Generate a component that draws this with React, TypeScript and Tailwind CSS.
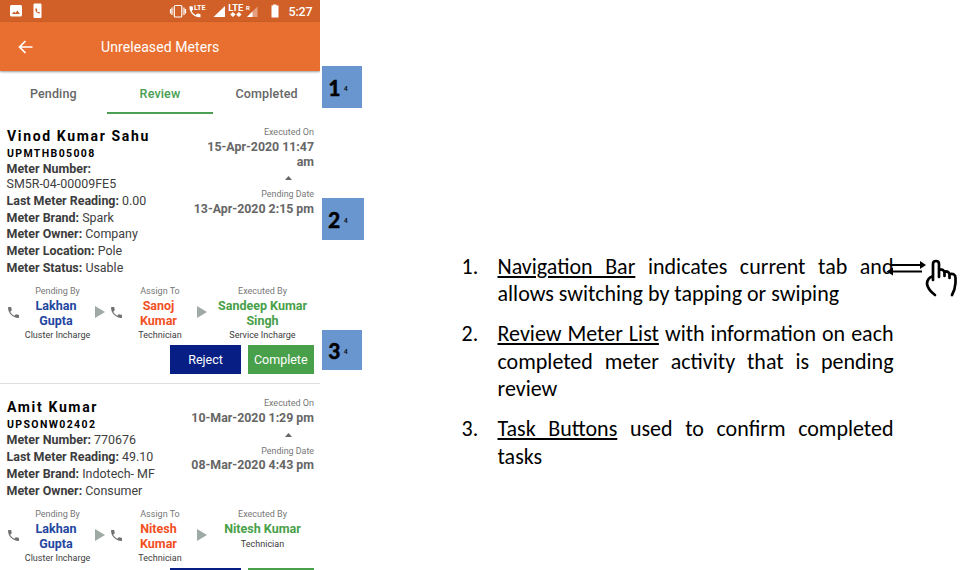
import React from "react";

type Person = { label: string; lines: string[]; role: string };
type Meter = {
  name: string;
  code: string;
  details: [string, string][];
  wrapFirst?: boolean;
  executed: string[];
  pending: string;
  people: Person[];
  actions: [string, string] | null;
};

const meters: Meter[] = [
  {
    name: "Vinod Kumar Sahu",
    code: "UPMTHB05008",
    wrapFirst: true,
    details: [
      ["Meter Number:", "SM5R-04-00009FE5"],
      ["Last Meter Reading:", "0.00"],
      ["Meter Brand:", "Spark"],
      ["Meter Owner:", "Company"],
      ["Meter Location:", "Pole"],
      ["Meter Status:", "Usable"],
    ],
    executed: ["15-Apr-2020 11:47", "am"],
    pending: "13-Apr-2020 2:15 pm",
    people: [
      { label: "Pending By", lines: ["Lakhan", "Gupta"], role: "Cluster Incharge" },
      { label: "Assign To", lines: ["Sanoj", "Kumar"], role: "Technician" },
      { label: "Executed By", lines: ["Sandeep Kumar", "Singh"], role: "Service Incharge" },
    ],
    actions: ["Reject", "Complete"],
  },
  {
    name: "Amit Kumar",
    code: "UPSONW02402",
    details: [
      ["Meter Number:", "770676"],
      ["Last Meter Reading:", "49.10"],
      ["Meter Brand:", "Indotech- MF"],
      ["Meter Owner:", "Consumer"],
    ],
    executed: ["10-Mar-2020 1:29 pm"],
    pending: "08-Mar-2020 4:43 pm",
    people: [
      { label: "Pending By", lines: ["Lakhan", "Gupta"], role: "Cluster Incharge" },
      { label: "Assign To", lines: ["Nitesh", "Kumar"], role: "Technician" },
      { label: "Executed By", lines: ["Nitesh Kumar"], role: "Technician" },
    ],
    actions: null,
  },
];

const PHONE =
  "M6.62 10.79c1.44 2.83 3.76 5.14 6.59 6.59l2.2-2.2c.27-.27.67-.36 1.02-.24 1.12.37 2.33.57 3.57.57.55 0 1 .45 1 1V20c0 .55-.45 1-1 1-9.39 0-17-7.61-17-17 0-.55.45-1 1-1h3.5c.55 0 1 .45 1 1 0 1.25.2 2.45.57 3.57.11.35.03.74-.25 1.02l-2.2 2.2z";

function Phone() {
  return (
    <svg viewBox="3 3 18 18" className="h-[11px] w-[11px] shrink-0 fill-[#6f7173]">
      <path d={PHONE} />
    </svg>
  );
}

function Arrow() {
  return (
    <svg viewBox="0 0 10 12" className="h-3 w-2.5 shrink-0 fill-[#9eaaa3]">
      <path d="M0 0L10 6L0 12Z" />
    </svg>
  );
}

function PersonBlock({ p, color, shift = "" }: { p: Person; color: string; shift?: string }) {
  return (
    <div className="flex flex-col items-center whitespace-nowrap text-center">
      <div className="h-[13px] text-[9px] leading-[13px] text-[#777]">{p.label}</div>
      <div className={`pt-[1px] text-[12.5px] leading-[14.5px] font-bold ${color} ${shift}`}>
        {p.lines.map((l) => (
          <div key={l}>{l}</div>
        ))}
      </div>
      <div className="text-[9px] leading-[14px] text-[#3c3c3c]">{p.role}</div>
    </div>
  );
}

function Card({ m }: { m: Meter }) {
  return (
    <section className="h-[271px] w-80 pt-[14px]">
      <div className={`flex justify-between pr-[6px] pl-[6.5px] ${m.wrapFirst ? "h-[157px]" : "h-[109px]"}`}>
        <div className="whitespace-nowrap">
          <div className="h-[17px] pl-[0.5px] text-[14px] leading-[17px] font-bold tracking-[1.65px] text-black">{m.name}</div>
          <div className="h-[15px] pl-[0.5px] text-[10.5px] leading-[17px] font-bold tracking-[1.38px] text-black">{m.code}</div>
          <div className="flex flex-col gap-[2px] pt-[2px] text-[12.45px] leading-[14.85px] text-[#404040]">
            {m.details.map(([k, v], i) => (
              <div key={k}>
                <b className="font-bold text-[#3c3c3c]">{k}</b> {m.wrapFirst && i === 0 && <br />}
                {v}
              </div>
            ))}
          </div>
        </div>
        <div className="text-right whitespace-nowrap text-[#666]">
          <div className="h-[12px] text-[9px] leading-[9px] text-[#777]">Executed On</div>
          <div className="text-[12.35px] leading-[14.5px] font-bold">
            {m.executed.map((l) => (
              <div key={l}>{l}</div>
            ))}
          </div>
          <svg viewBox="0 0 7 4" className="mt-[7px] mr-[22px] ml-auto block h-1 w-[7px] fill-[#666]">
            <path d="M0 4L3.5 0L7 4Z" />
          </svg>
          <div className="mt-[7px] h-[14px] text-[8.9px] leading-[14px] text-[#777]">Pending Date</div>
          <div className="pt-[0.5px] text-[12.35px] leading-[15px] font-bold">{m.pending}</div>
        </div>
      </div>
      <div className="grid h-[60px] grid-cols-[18px_79px_18px_73px_20px_109px]">
        <div className="flex items-center pb-[6px] pl-[8px]"><Phone /></div>
        <PersonBlock p={m.people[0]} color="text-[#1f479f]" shift="-ml-[3px]" />
        <div className="-ml-[2.500px] flex w-8 items-center pb-[6px]"><Arrow /><span className="w-[6px]" /><Phone /></div>
        <div className="pl-[17px]"><PersonBlock p={m.people[1]} color="text-[#f2501f]" shift="-ml-[3px]" /></div>
        <div className="flex items-center pb-[6px] pl-[9px]"><Arrow /></div>
        <PersonBlock p={m.people[2]} color="text-[#48a049]" />
      </div>
      <div className="flex h-[37.500px] justify-end gap-[7px] pr-[6.5px] text-[12.5px] leading-[30px] text-white">
        <button className="flex h-[29px] w-[71px] justify-center bg-[#071f85]">{m.actions?.[0]}</button>
        <button className="flex h-[29px] w-[65.500px] justify-center bg-[#48a04a]">{m.actions?.[1]}</button>
      </div>
      <hr className="h-[1.500px] border-0 bg-[#dedede]" />
    </section>
  );
}

function StatusBar() {
  return (
    <div className="h-[22px] bg-[#d06028]">
      <svg viewBox="0 0 320 22" className="h-[22px] w-80" fill="#fff">
        <path fillRule="evenodd" d="M11.5 5h9q1.5 0 1.5 1.5v8.5q0 1.500-1.500 1.500h-9q-1.500 0-1.500-1.500V6.500Q10 5 11.500 5ZM12 14h8l-2.600-3.500-2 2.500-1.400-1.500Z" />
        <path fillRule="evenodd" d="M34.500 3.500h6q1 0 1 1v12.500q0 1-1 1h-6q-1 0-1-1V4.500q0-1 1-1ZM35.300 8.500q-.2 4.800 4.500 5v-1.300l-1.400-.4-.5.500q-.8-.5-1.100-1.300l.5-.6-.3-1.900Z" />
        <g fill="none" stroke="#fff" strokeWidth="1.200">
          <rect x="174.300" y="5.500" width="7.500" height="11.500" rx="1" />
          <path d="M172 7.500v7.500M170.500 9v4.500M184 7.500v7.500M185.500 9v4.500" />
        </g>
        <path transform="translate(187.500 4.300) scale(.62)" d={PHONE} />
        <text x="194" y="9.800" fontSize="6.800" fontWeight="700" textLength="11.500" lengthAdjust="spacingAndGlyphs">LTE</text>
        <path d="M213.500 17L225 6V17Z" />
        <text x="228.300" y="10.800" fontSize="8.500" fontWeight="700" textLength="15" lengthAdjust="spacingAndGlyphs">LTE</text>
        <path d="M230.200 14.500l2.700-2.500 2.700 2.500-2.700 2.500ZM236.200 14.500l2.700-2.500 2.700 2.500-2.700 2.500Z" />
        <text x="246" y="9.800" fontSize="6" fontWeight="700">R</text>
        <path d="M247 17L257.500 6.500V17Z" opacity=".4" />
        <path d="M247 17L252.500 11.500V17Z" />
        <path d="M273 5.500v-1h3.500v1h2v12h-7v-12Z" />
        <text x="288.500" y="15.800" fontSize="12.500" fontWeight="500" textLength="24">5:27</text>
      </svg>
    </div>
  );
}

function Marker({ n, box }: { n: string; box: string }) {
  return (
    <div className={`flex items-center bg-[#6996cf] pl-[6px] font-[Carlito,Lato,sans-serif] font-bold text-black ${box}`}>
      <span className="w-[16px] pt-[1px] text-[24px] leading-none [-webkit-text-stroke:0.4px_black]">{n}</span>
      <span className="w-1 pt-[2px] text-[7px] leading-none">4</span>
    </div>
  );
}

function Line({ last, children }: { last?: boolean; children: React.ReactNode }) {
  return (
    <div className={last ? "whitespace-nowrap" : "[text-align-last:justify]"}>{children}</div>
  );
}

export default function App() {
  return (
    <main className="flex h-[570px] w-[970px] overflow-hidden bg-white font-[Roboto,sans-serif]">
      <div className="h-[570px] w-80 shrink-0 overflow-hidden">
        <StatusBar />
        <header className="relative z-10 flex h-[49px] items-center bg-[#e96f31] shadow-[0_1px_2px_rgba(0,0,0,0.4)]">
          <svg viewBox="0 0 16 14" className="ml-[18px] h-[14px] w-4 fill-none stroke-white stroke-[1.7]">
            <path d="M14.500 7H1.500M7.500 1L1.500 7L7.500 13" />
          </svg>
          <h1 className="ml-[67px] pt-[2px] text-[14px] tracking-[0.08px] whitespace-nowrap text-white">Unreleased Meters</h1>
        </header>
        <nav className="grid h-[43px] grid-cols-3 text-center text-[12.5px] leading-[45px] font-medium tracking-[0.15px] text-[#666]">
          <div className="h-[43px]">Pending</div>
          <div className="h-[43px] border-b-2 border-[#4ba056] text-[#489e52]">Review</div>
          <div className="h-[43px]">Completed</div>
        </nav>
        {meters.map((m) => (
          <Card key={m.name} m={m} />
        ))}
      </div>
      <aside className="ml-[2px] flex w-[42px] shrink-0 flex-col pt-[66px]">
        <Marker n="1" box="h-[42px] w-10" />
        <Marker n="2" box="mt-[90px] h-[42px] w-[42px]" />
        <Marker n="3" box="mt-[90px] h-10 w-10" />
      </aside>
      <article className="relative ml-[97.500px] pt-[252.500px] font-[Carlito,Lato,sans-serif] text-[22px] leading-[27.700px] text-black">
        <ol className="flex w-[432px] flex-col gap-[11.900px]">
          <li className="flex">
            <span className="w-[36px] shrink-0">1.</span>
            <div className="w-[396px]">
              <Line><u className="decoration-[1.500px] underline-offset-2">Navigation Bar</u> indicates current tab and</Line>
              <Line last>allows switching by tapping or swiping</Line>
            </div>
          </li>
          <li className="flex">
            <span className="w-[36px] shrink-0">2.</span>
            <div className="w-[396px]">
              <Line><u className="decoration-[1.500px] underline-offset-2">Review Meter List</u> with information on each</Line>
              <Line>completed meter activity that is pending</Line>
              <Line last>review</Line>
            </div>
          </li>
          <li className="flex">
            <span className="w-[36px] shrink-0">3.</span>
            <div className="w-[396px]">
              <Line><u className="decoration-[1.500px] underline-offset-2">Task Buttons</u> used to confirm completed</Line>
              <Line last>tasks</Line>
            </div>
          </li>
        </ol>
        <svg viewBox="0 0 72 40" className="absolute top-[258px] left-[423.500px] h-10 w-[72px]" fill="none" stroke="#000">
          <path d="M5 7H37M5 13.500H37" strokeWidth="2" />
          <path d="M35 3L41 7L35 11ZM8 9.500L1.500 13.500L8 17.500Z" fill="#000" stroke="none" />
          <path strokeWidth="2.700" strokeLinecap="round" strokeLinejoin="round" d="M48 22V6Q48 3 51 3Q54 3 54 6V19M54 11.500Q59.500 11 59.500 15V18M59.500 13.500Q64.500 13 64.500 17V20M64.500 16Q70.500 15 70.500 20V25Q70 32 67 37M48 18Q42 20 42 26Q43 32 50 37" />
        </svg>
      </article>
    </main>
  );
}
